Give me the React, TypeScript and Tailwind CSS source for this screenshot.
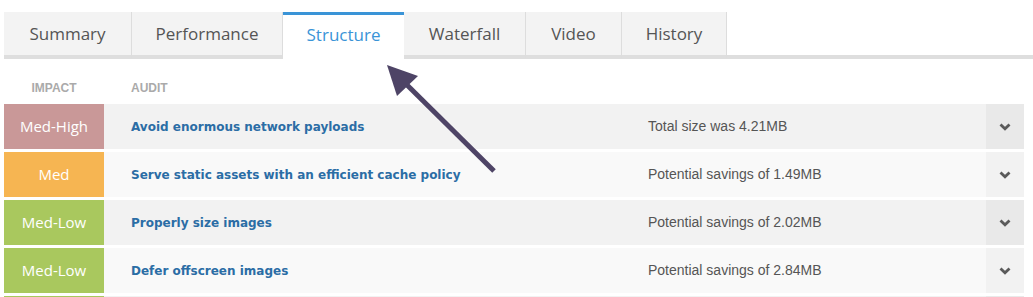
import React from 'react';

const tabs = [
  { label: 'Summary', w: 'w-[128px]' },
  { label: 'Performance', w: 'w-[151px]' },
  { label: 'Structure', w: 'w-[121px]', active: true },
  { label: 'Waterfall', w: 'w-[122px]' },
  { label: 'Video', w: 'w-[96px]' },
  { label: 'History', w: 'w-[105px]' },
];

const audits = [
  { impact: 'Med-High', color: 'bg-[#c99898]', title: 'Avoid enormous network payloads', detail: 'Total size was 4.21MB' },
  { impact: 'Med', color: 'bg-[#f6b552]', title: 'Serve static assets with an efficient cache policy', detail: 'Potential savings of 1.49MB' },
  { impact: 'Med-Low', color: 'bg-[#a9c85e]', title: 'Properly size images', detail: 'Potential savings of 2.02MB' },
  { impact: 'Med-Low', color: 'bg-[#a9c85e]', title: 'Defer offscreen images', detail: 'Potential savings of 2.84MB' },
  // last row only peeks in at the bottom edge
  { impact: '', color: 'bg-[#a9c85e]', title: '', detail: '' },
];

const Chevron = () => (
  <svg width="12" height="8" viewBox="0 0 12 8">
    <polyline points="1.5,1.5 6,5.8 10.5,1.5" fill="none" stroke="#5a5a5a" strokeWidth="2.8" />
  </svg>
);

export default function App() {
  return (
    <div className="relative w-[1033px] h-[297px] overflow-hidden bg-white pl-[4px] pt-[12px]">
      <div className="flex h-[47px]">
        {tabs.map((t) =>
          t.active ? (
            <div
              key={t.label}
              className={`${t.w} flex items-center justify-center bg-white border-t-[3px] border-[#3a94d7] pb-[4px] text-[17px] text-[#3a94d7] font-['Open_Sans',sans-serif]`}
            >
              {t.label}
            </div>
          ) : (
            <div
              key={t.label}
              className={`${t.w} flex items-center justify-center bg-[#f3f3f3] border-r border-r-[#dddddd] border-b-4 border-b-[#dedede] text-[17px] text-[#555555] font-['Open_Sans',sans-serif]`}
            >
              {t.label}
            </div>
          )
        )}
        <div className="flex-1 border-b-4 border-b-[#dedede]" />
      </div>

      <div className="flex h-[45px] pt-[22px] text-[12px] font-bold text-[#aaaaaa] font-['Liberation_Sans',Arial,sans-serif] leading-[14px]">
        <div className="w-[100px] text-center">IMPACT</div>
        <div className="pl-[27px]">AUDIT</div>
      </div>

      <div className="flex flex-col gap-[3px] w-[1020px]">
        {audits.map((a, i) => (
          <div key={i} className={`flex h-[45px] shrink-0 ${i % 2 === 0 ? 'bg-[#f2f2f2]' : 'bg-[#f9f9f9]'}`}>
            <div className={`w-[100px] ${a.color} flex items-center justify-center text-white text-[15px] font-['Open_Sans',sans-serif]`}>
              {a.impact}
            </div>
            <div className="w-[544px] pl-[27px] flex items-center text-[12px] font-bold text-[#2b6da5] font-['DejaVu_Sans',Verdana,sans-serif]">
              {a.title}
            </div>
            <div className="flex-1 flex items-center text-[14px] text-[#555555] font-['Liberation_Sans',Arial,sans-serif]">
              {a.detail}
            </div>
            <div className={`w-[38px] flex items-center justify-center ${i % 2 === 0 ? 'bg-[#e9e9e9]' : 'bg-[#f2f2f2]'}`}>
              {a.title && <Chevron />}
            </div>
          </div>
        ))}
      </div>

      <svg className="absolute left-0 top-0 pointer-events-none" width="1033" height="297">
        <line x1="494" y1="171" x2="402" y2="80" stroke="#4e4466" strokeWidth="5" />
        <polygon points="387,65 418,76 397,96" fill="#4e4466" />
      </svg>
    </div>
  );
}
